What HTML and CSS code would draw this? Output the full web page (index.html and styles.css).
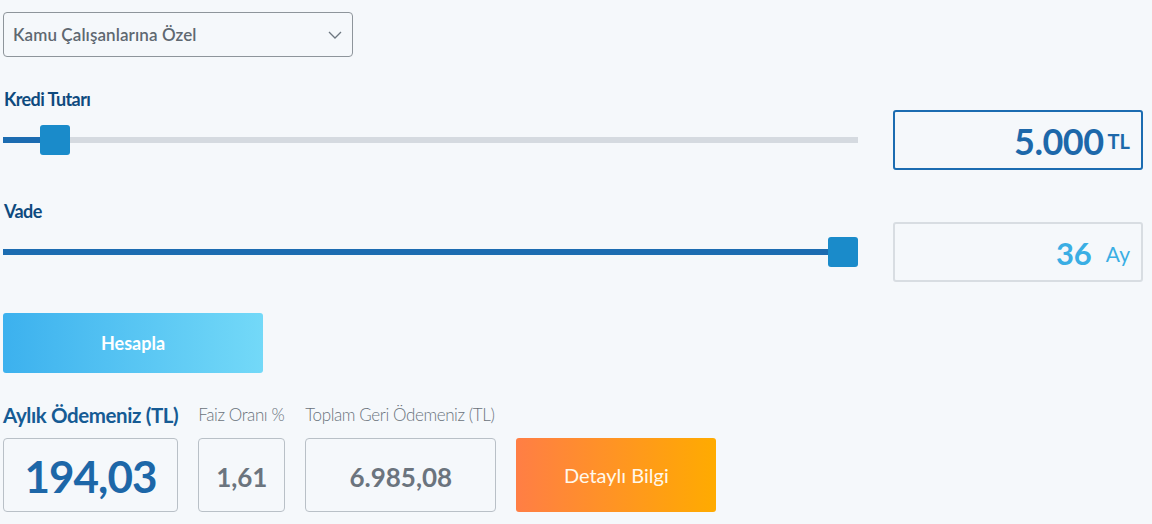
FILE: index.html
```html
<!DOCTYPE html>
<html lang="tr">
<head>
<meta charset="utf-8">
<title>Kredi Hesaplama</title>
<link rel="stylesheet" href="styles.css">
</head>
<body>
<div class="calc">
  <div class="select">
    <span class="select-text">Kamu Çalışanlarına Özel</span>
    <svg class="chevron" width="14" height="8" viewBox="0 0 14 8"><polyline points="1,1 7,7 13,1" fill="none" stroke="#6d7780" stroke-width="1.3"/></svg>
  </div>

  <div class="field field-first">
    <div class="label">Kredi Tutarı</div>
    <div class="slider" style="--p:0.045">
      <div class="track"><div class="fill"></div></div>
      <div class="thumb"></div>
    </div>
    <div class="value-box active">
      <span class="num">5.000</span><span class="unit unit-tl">TL</span>
    </div>
  </div>

  <div class="field">
    <div class="label">Vade</div>
    <div class="slider" style="--p:1">
      <div class="track"><div class="fill"></div></div>
      <div class="thumb"></div>
    </div>
    <div class="value-box">
      <span class="num num-light">36</span><span class="unit unit-ay">Ay</span>
    </div>
  </div>

  <button class="btn-calc">Hesapla</button>

  <div class="results">
    <div class="res res-main">
      <div class="res-label main">Aylık Ödemeniz (TL)</div>
      <div class="res-box"><span class="big">194,03</span></div>
    </div>
    <div class="res res-rate">
      <div class="res-label">Faiz Oranı %</div>
      <div class="res-box"><span class="mid">1,61</span></div>
    </div>
    <div class="res res-total">
      <div class="res-label">Toplam Geri Ödemeniz (TL)</div>
      <div class="res-box"><span class="mid">6.985,08</span></div>
    </div>
    <button class="btn-detail">Detaylı Bilgi</button>
  </div>
</div>
</body>
</html>
```

FILE: styles.css
```css
* { box-sizing: border-box; }
html, body {
  margin: 0;
  background: #f5f8fb;
  font-family: "Lato", "Open Sans", sans-serif;
}
.calc {
  padding: 12px 10px 0 3px;
  width: 1152px;
}
.select {
  width: 350px;
  height: 45px;
  border: 1px solid #8e959b;
  border-radius: 4px;
  display: flex;
  align-items: center;
  justify-content: space-between;
  padding: 0 9px 0 9px;
}
.select-text {
  font-size: 17px;
  color: #5f6871;
  font-weight: 600;
  letter-spacing: 0.1px;
}
.chevron { margin-right: 1px; margin-top: 1px; }

.field {
  display: grid;
  grid-template-columns: 855px 250px;
  grid-template-rows: 22px 60px;
  column-gap: 35px;
  margin-top: 30px;
}
.field-first { margin-top: 31px; }
.label {
  grid-column: 1;
  grid-row: 1;
  font-size: 18px;
  line-height: 22px;
  font-weight: 700;
  color: #0e4a7e;
  letter-spacing: -0.6px;
  padding-left: 1px;
}
.slider {
  grid-column: 1;
  grid-row: 2;
  position: relative;
  align-self: center;
  height: 30px;
  display: flex;
  align-items: center;
}
.track {
  width: 100%;
  height: 6px;
  background: #d5dae0;
}
.fill {
  height: 100%;
  width: calc(var(--p) * (100% - 30px) + 4px);
  background: #1c6cb1;
}
.thumb {
  position: absolute;
  top: 0;
  left: calc(var(--p) * (100% - 30px));
  width: 30px;
  height: 30px;
  border-radius: 3px;
  background: #1a8bca;
}
.value-box {
  grid-column: 2;
  grid-row: 2;
  height: 60px;
  border: 2px solid #d8dde2;
  border-radius: 3px;
  display: flex;
  align-items: center;
  justify-content: flex-end;
  padding-right: 11px;
}
.value-box.active { border-color: #1c6cb1; }
.num {
  font-size: 36px;
  font-weight: 700;
  color: #1d68aa;
  letter-spacing: -0.5px;
  margin-top: 2px;
}
.num-light { color: #3aaee4; font-size: 31px; letter-spacing: 0; }
.unit-tl {
  font-size: 20px;
  font-weight: 700;
  color: #1d68aa;
  margin-left: 4px;
  margin-top: 2px;
}
.unit-ay {
  font-size: 21px;
  color: #3aaee4;
  margin-left: 14px;
  margin-top: 2px;
}

.btn-calc {
  display: block;
  margin-top: 31px;
  width: 260px;
  height: 60px;
  border: none;
  border-radius: 3px;
  background: linear-gradient(90deg, #3cb1ee 0%, #73d9f8 100%);
  color: #ffffff;
  font-family: inherit;
  font-size: 18px;
  font-weight: 700;
  padding: 0;
  margin-left: 0;
}

.results {
  display: flex;
  align-items: flex-end;
  gap: 20px;
  margin-top: 31px;
}
.res { display: flex; flex-direction: column; gap: 12px; }
.res-label {
  font-size: 17px;
  line-height: 22px;
  font-weight: 300;
  color: #6a737c;
  white-space: nowrap;
  letter-spacing: -0.4px;
}
.res-label.main {
  font-size: 20.5px;
  font-weight: 700;
  color: #165b94;
  letter-spacing: -0.4px;
}
.res-box {
  height: 74px;
  border: 1px solid #b9c0c7;
  border-radius: 4px;
  display: flex;
  align-items: center;
  justify-content: center;
}
.res-main .res-box { width: 175px; }
.res-rate .res-box { width: 87px; }
.res-total .res-box { width: 191px; }
.big {
  font-size: 44px;
  font-weight: 700;
  color: #1d67a8;
  letter-spacing: -1px;
  margin-top: 2px;
}
.mid {
  font-size: 26px;
  font-weight: 700;
  color: #6b747e;
  margin-top: 3px;
}
.btn-detail {
  width: 200px;
  height: 74px;
  border: none;
  border-radius: 3px;
  background: linear-gradient(90deg, #ff7e45 0%, #ffab00 100%);
  color: #fff8ea;
  font-family: inherit;
  font-size: 20px;
  font-weight: 400;
  padding: 0;
}
```
